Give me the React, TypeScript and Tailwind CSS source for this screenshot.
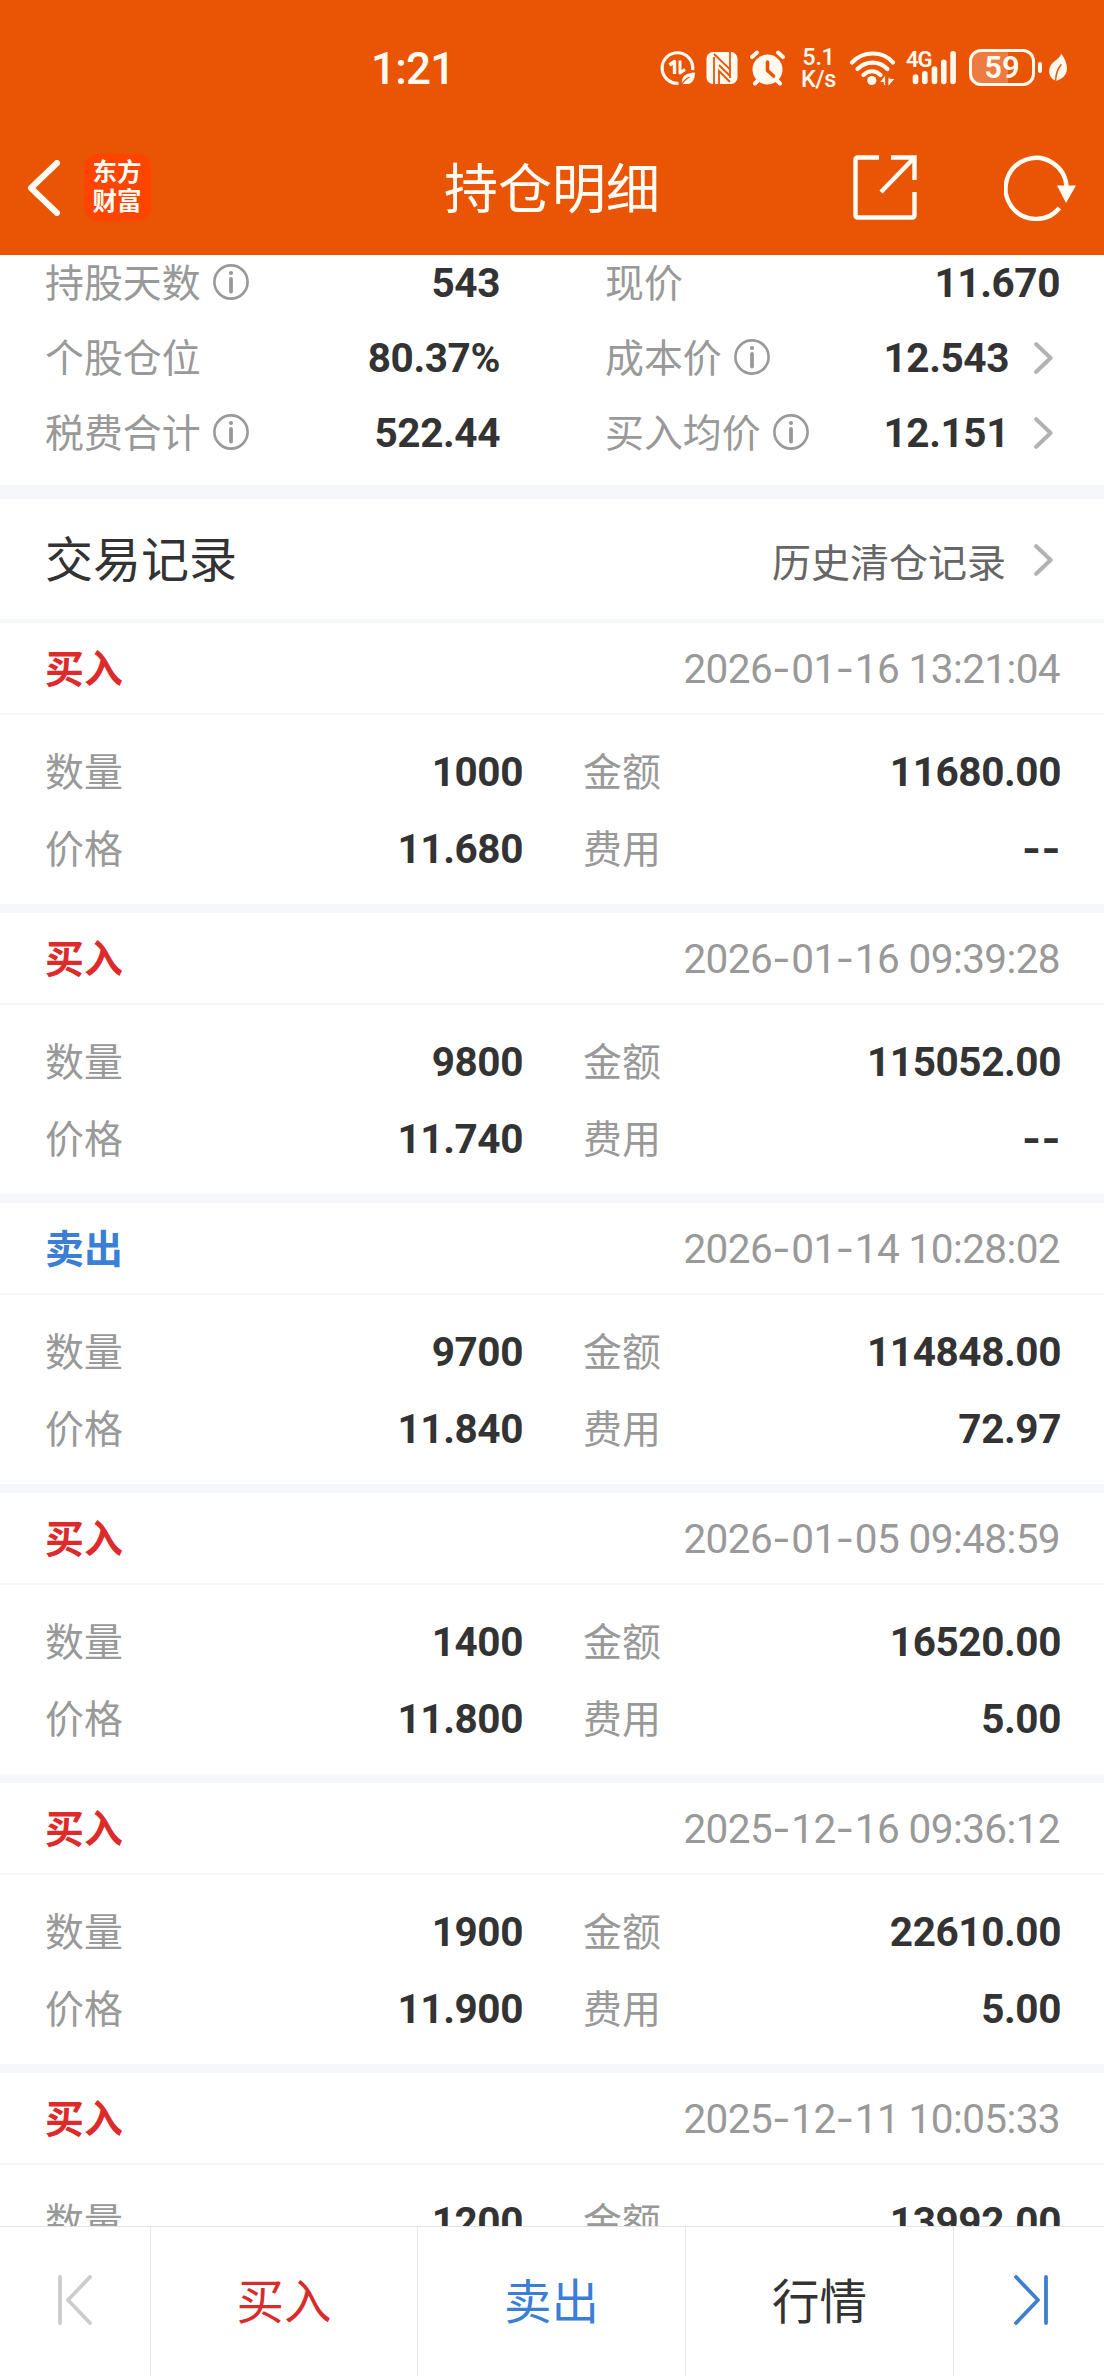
import type { ReactNode } from 'react';

const cjk = "font-['Noto_Sans_CJK_SC',sans-serif]";
const num = "font-['Roboto','Noto_Sans_CJK_SC',sans-serif]";

const records = [
  { side: 'buy', time: '2026-01-16 13:21:04', qty: '1000', amount: '11680.00', price: '11.680', fee: '--' },
  { side: 'buy', time: '2026-01-16 09:39:28', qty: '9800', amount: '115052.00', price: '11.740', fee: '--' },
  { side: 'sell', time: '2026-01-14 10:28:02', qty: '9700', amount: '114848.00', price: '11.840', fee: '72.97' },
  { side: 'buy', time: '2026-01-05 09:48:59', qty: '1400', amount: '16520.00', price: '11.800', fee: '5.00' },
  { side: 'buy', time: '2025-12-16 09:36:12', qty: '1900', amount: '22610.00', price: '11.900', fee: '5.00' },
  { side: 'buy', time: '2025-12-11 10:05:33', qty: '1200', amount: '13992.00', price: '11.660', fee: '5.00' },
];

// Roboto's hyphen is too short next to the digits, Inter's is wider
function Digits({ text }: { text: string }) {
  return (
    <>
      {text.split(/(-)/).map((part, i) =>
        part === '-' ? (
          <span key={i} className="font-['Inter'] tracking-[0.6px]">-</span>
        ) : (
          part
        )
      )}
    </>
  );
}

function Label({ children }: { children: ReactNode }) {
  return <span className={`${cjk} text-[38.9px] leading-none text-[#999999] relative -top-[2px]`}>{children}</span>;
}

function Value({ text }: { text: string }) {
  return (
    <span className={`${num} relative top-px -mr-px text-[40.5px] leading-none font-bold tracking-[-0.4px] text-[#333333] whitespace-pre`}>
      <Digits text={text} />
    </span>
  );
}

function InfoIcon() {
  return (
    <svg className="relative -top-px ml-3 h-9 w-9" viewBox="0 0 36 36" fill="none" stroke="#999999">
      <circle cx="18" cy="18" r="16.6" strokeWidth="2.6" />
      <path d="M18 15v12.5" strokeWidth="3.8" strokeLinecap="round" />
      <circle cx="18" cy="9" r="2.1" fill="#999999" stroke="none" />
    </svg>
  );
}

function Chevron() {
  return (
    <svg className="h-8 w-[19px]" viewBox="0 0 19 32" fill="none">
      <path d="M2.2 2.2L16.6 16L2.2 29.8" stroke="#b2b2b2" strokeWidth="4" strokeLinecap="round" strokeLinejoin="round" />
    </svg>
  );
}

function StatusBar() {
  return (
    <div className={`${num} flex h-[135px] items-center text-[#fffaf0]`}>
      <div className="ml-[371px] w-[289px] pt-[2px] text-[44px] leading-none font-medium tracking-[-0.8px]">1:21</div>
      <svg className="mr-[10px] h-[36px] w-[36px]" viewBox="0 0 36 36" fill="none" stroke="currentColor">
        <path d="M18.500 33.3A15.3 15.3 0 1 1 32.600 20" strokeWidth="3.2" />
        <path d="M9.500 15l5-3.500v12.500" strokeWidth="3.4" strokeLinejoin="round" />
        <path d="M20 10.500v12.500l5-3.500" strokeWidth="3" strokeLinejoin="round" />
        <path d="M22 34c-1-8 4-11 13-11.500c0 7-3 12.500-10 11.500z" fill="currentColor" stroke="none" />
        <path d="M21.500 35c2-4 4-6 8-8" stroke="#e95504" strokeWidth="1.300" />
      </svg>
      <svg className="mr-[12px] h-[34px] w-[32px]" viewBox="0 0 32 34" fill="none">
        <rect x="0.500" y="1" width="31" height="32" rx="6.500" fill="currentColor" />
        <path d="M8 34V6M8 3l16 15.500V1M24 3v24M24 31L13 20v13M13 14l11 11" stroke="#e95504" strokeWidth="1.800" />
      </svg>
      <svg className="mr-[16px] h-[36px] w-[35px]" viewBox="0 0 35 36" fill="none" stroke="currentColor" strokeLinecap="round">
        <circle cx="17.500" cy="19.500" r="15" fill="currentColor" stroke="none" />
        <path d="M2 7l5-4.500M33 7l-5-4.500M5 33.500l4-4M30 33.500l-4-4" strokeWidth="4" />
        <path d="M17.500 12v8.500l6 5.500" stroke="#e95504" strokeWidth="3.600" />
      </svg>
      <div className="mr-[13px] flex w-[35px] flex-col items-center text-[23.500px] leading-[22px] font-medium tracking-[-0.3px]">
        <span>5.1</span>
        <span>K/s</span>
      </div>
      <svg className="mr-[11px] h-[36px] w-[46px]" viewBox="0 0 46 36" fill="none" stroke="currentColor" strokeWidth="4.200" strokeLinecap="round">
        <path d="M3 12.500C14 0.500 34 0.500 44 12.500" />
        <path d="M8.500 19c8.500-8.500 21.500-8.500 30 0" />
        <path d="M14.500 25c5-5 12-5 17 0" />
        <circle cx="22.800" cy="30.500" r="4.600" fill="currentColor" stroke="none" />
        <path d="M32.500 31.500h3v-4zM35.500 28v6.500M40 28v6.500M40 34l4-4.500h-4z" strokeWidth="1.200" fill="currentColor" />
      </svg>
      <div className="mr-[13px] flex h-[36px] w-[50px] items-start">
        <span className="w-0 pt-px text-[22px] leading-[18px] font-semibold tracking-[-1px]">4G</span>
        <svg className="h-[36px] w-[50px] shrink-0" viewBox="0 0 50 36" stroke="currentColor" strokeWidth="5.600" strokeLinecap="round">
          <path d="M9.500 27v4.500M18.800 23.700v7.800M28.500 19v12.500M37.800 12.300v19.200M47.100 3.700v27.800" />
        </svg>
      </div>
      <div className="flex h-[37px] w-[66px] items-center justify-center rounded-[12px] border-[3px] border-current bg-[linear-gradient(90deg,#ee7b40_59%,transparent_59%)] bg-origin-border text-[31px] leading-none font-semibold">
        59
      </div>
      <div className="mr-[7px] ml-[3px] h-[11px] w-[4px] rounded-full bg-current" />
      <svg className="h-[30px] w-[18px]" viewBox="0 0 19 30">
        <path d="M13 0c6 8 8 17 3.500 23c-3 4-7 4.500-9 6c-7-3-9-10-6-16c2.500-5 9-7 11.500-13z" fill="currentColor" />
        <path d="M7 29c0-8 2-13 6-18" fill="none" stroke="#e95504" strokeWidth="1.600" />
      </svg>
    </div>
  );
}

function NavBar() {
  return (
    <div className="grid h-[120px] grid-cols-[1fr_auto_1fr] pb-[15px] text-[#fffdf5]">
      <div className="flex items-center pl-[26px]">
        <svg className="h-[56px] w-[34px]" viewBox="0 0 34 56" fill="none" stroke="currentColor" strokeWidth="6">
          <path d="M31 3L5 28l26 25" strokeLinejoin="round" strokeLinecap="round" />
        </svg>
        <div className={`${cjk} ml-[24px] flex h-[67px] w-[67px] flex-col items-center justify-center rounded-[14px] bg-[#ff4400] pr-px pb-[5px] text-[24.5px] leading-[29px] font-bold`}>
          <span>东方</span>
          <span>财富</span>
        </div>
      </div>
      <h1 className={`${cjk} flex items-center pb-[4px] text-[54px] leading-none font-normal`}>持仓明细</h1>
      <div className="flex items-center justify-end pr-[28px]">
        <svg className="mr-[87px] h-[65px] w-[64px]" viewBox="0 0 64 65" fill="none" stroke="currentColor" strokeWidth="4.400">
          <path d="M26 2.500H5Q2.500 2.500 2.500 5v55q0 2.500 2.500 2.500h54q2.500 0 2.500-2.500V37" />
          <path d="M38 2.500h23.500V25M60.500 3.500L28 37" />
        </svg>
        <svg className="h-[66px] w-[72px]" viewBox="0 0 72 66" fill="none">
          <path d="M55.500 53A30.500 30.500 0 1 1 62.500 31" stroke="currentColor" strokeWidth="4.400" />
          <path d="M53 30.500h19L62 48z" fill="currentColor" />
        </svg>
      </div>
    </div>
  );
}

function SummaryRow({ label, value, info, link }: { label: string; value: string; info?: boolean; link?: boolean }) {
  return (
    <div className="flex h-[75px] items-center">
      <Label>{label}</Label>
      {info && <InfoIcon />}
      <div className="ml-auto flex items-center">
        <Value text={value} />
        {link && (
          <span className="mr-[6px] ml-[26px]">
            <Chevron />
          </span>
        )}
      </div>
    </div>
  );
}

function Cell({ label, value }: { label: string; value: string }) {
  return (
    <div className="flex h-[77px] items-center justify-between">
      <Label>{label}</Label>
      <Value text={value} />
    </div>
  );
}

function TradeRecord({ record }: { record: (typeof records)[number] }) {
  const buy = record.side === 'buy';
  return (
    <section className="h-[290px] shrink-0 border-b-[9px] border-[#f5f7fa] bg-white">
      <div className="flex h-[92px] items-center justify-between border-b-2 border-[#f7f7f8] pr-[44px] pl-[45px]">
        <span className={`${cjk} relative -top-[2px] text-[38.9px] leading-none font-bold ${buy ? 'text-[#dd2b2b]' : 'text-[#3a7fd5]'}`}>
          {buy ? '买入' : '卖出'}
        </span>
        <span className={`${num} relative top-px text-[40.500px] leading-none tracking-[-0.600px] text-[#999999]`}>
          <Digits text={record.time} />
        </span>
      </div>
      <div className="grid grid-cols-[477px_477px] gap-x-[61px] pt-[18px] pl-[45px]">
        <Cell label="数量" value={record.qty} />
        <Cell label="金额" value={record.amount} />
        <Cell label="价格" value={record.price} />
        <Cell label="费用" value={record.fee} />
      </div>
    </section>
  );
}

function BottomBar() {
  return (
    <nav className={`${cjk} grid h-[150px] grid-cols-[151px_267px_268px_268px_1fr] divide-x-[1px] divide-[#e8e8e8] border-t border-[#e4e4e4] bg-white text-[47.500px] leading-none`}>
      <button className="flex items-center justify-center pb-[3px]">
        <svg className="h-[50px] w-[34px]" viewBox="0 0 34 50" fill="none" stroke="#cccccc" strokeWidth="3.800" strokeLinecap="round" strokeLinejoin="round">
          <path d="M2 2v46M32 2L10 25l22 23" />
        </svg>
      </button>
      <button className="flex items-center justify-center pb-[5px] text-[#d82c2c]">买入</button>
      <button className="flex items-center justify-center pb-[5px] text-[#3a7fd5]">卖出</button>
      <button className="flex items-center justify-center pb-[5px] text-[#333333]">行情</button>
      <button className="flex items-center justify-center pb-[3px] pl-[3px]">
        <svg className="h-[50px] w-[34px]" viewBox="0 0 34 50" fill="none" stroke="#3f7fd0" strokeWidth="3.800" strokeLinecap="round" strokeLinejoin="round">
          <path d="M32 2v46M2 2l22 23L2 48" />
        </svg>
      </button>
    </nav>
  );
}

export default function App() {
  return (
    <div className="flex h-[2376px] w-[1104px] flex-col overflow-hidden bg-white">
      <header className="h-[255px] shrink-0 bg-[#e95504]">
        <StatusBar />
        <NavBar />
      </header>

      <main className="flex min-h-0 flex-1 flex-col overflow-hidden">
        <div className="grid h-[244px] shrink-0 grid-cols-[454px_454px] content-start gap-x-[106px] border-b-[14px] border-[#f5f7fa] pl-[45px]">
          <div className="-mt-[10px]">
            <SummaryRow label="持股天数" value="543" info />
            <SummaryRow label="个股仓位" value="80.37%" />
            <SummaryRow label="税费合计" value="522.44" info />
          </div>
          <div className="-mt-[10px]">
            <SummaryRow label="现价" value="11.670" />
            <SummaryRow label="成本价" value="12.543" info link />
            <SummaryRow label="买入均价" value="12.151" info link />
          </div>
        </div>

        <div className={`${cjk} flex h-[124px] shrink-0 items-center justify-between border-b-4 border-[#f5f7fa] pr-[51px] pl-[45px]`}>
          <h2 className="pb-[7px] text-[48px] leading-none text-[#333333]">交易记录</h2>
          <div className="flex items-center pt-[2px] text-[39px] leading-none text-[#666666]">
            历史清仓记录
            <span className="ml-[28px]">
              <Chevron />
            </span>
          </div>
        </div>

        {records.map((record) => (
          <TradeRecord key={record.time} record={record} />
        ))}
      </main>

      <BottomBar />
    </div>
  );
}
